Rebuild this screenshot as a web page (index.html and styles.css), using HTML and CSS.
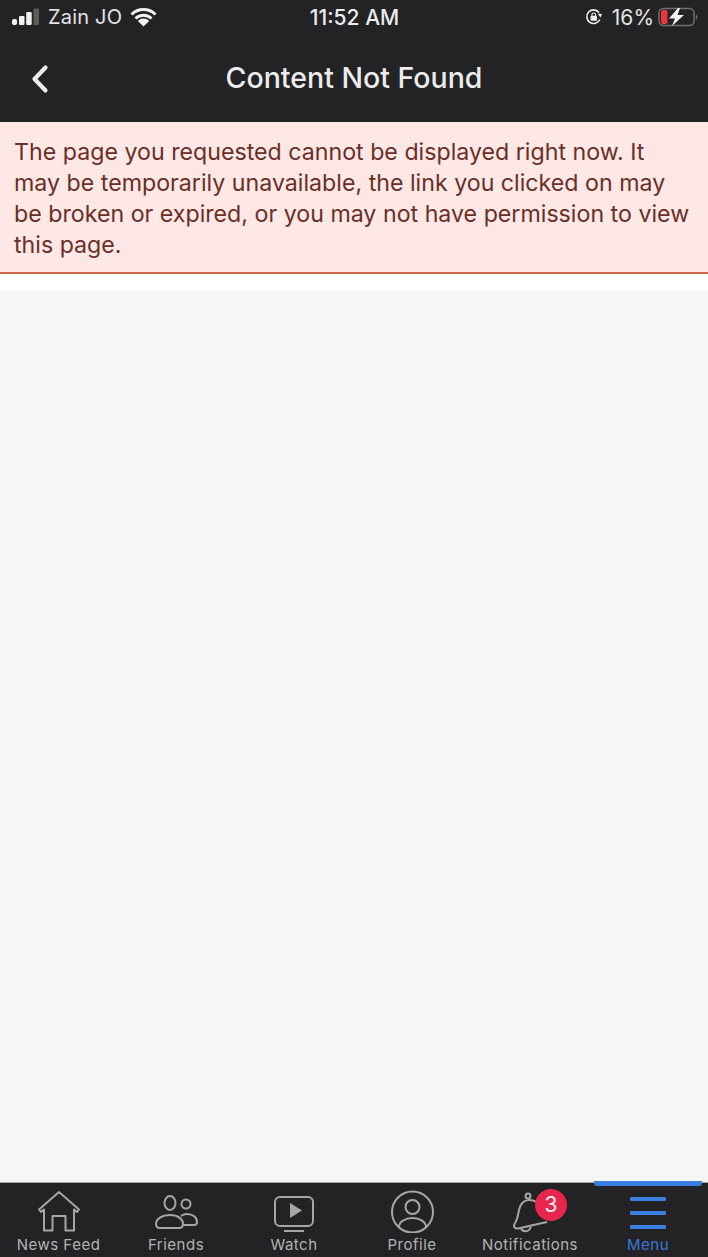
FILE: index.html
```html
<!DOCTYPE html>
<html lang="en">
<head>
<meta charset="utf-8">
<title>Content Not Found</title>
<link rel="stylesheet" href="styles.css">
</head>
<body>
<div class="app">
  <header class="top">
    <div class="status">
      <div class="status-left">
        <svg class="signal" width="31" height="18" viewBox="0 0 31 18"><rect x="2" y="11" width="5" height="6" rx="1.800" fill="#f2f2f2"/><rect x="9" y="8" width="5.500" height="9" rx="1.200" fill="#f2f2f2"/><rect x="16.200" y="4" width="5.500" height="13" rx="1.200" fill="#f2f2f2"/><rect x="23.500" y="0.500" width="5.500" height="16.500" rx="1.200" fill="#5c5c5c"/></svg>
        <span class="carrier">Zain JO</span>
        <svg class="wifi" width="27" height="19" viewBox="0 0 27 19"><path d="M1.500 6.500a17 17 0 0 1 24 0M5.500 10.500a11.500 11.500 0 0 1 16 0" fill="none" stroke="#f2f2f2" stroke-width="3"/><path d="M13.500 18.500L7.800 13a8 8 0 0 1 11.400 0z" fill="#f2f2f2"/></svg>
      </div>
      <span class="clock">11:52 AM</span>
      <div class="status-right">
        <svg class="lock" width="18" height="18" viewBox="0 0 18 18"><path d="M14.800 11.500A6.800 6.800 0 1 1 14 4.500" fill="none" stroke="#f0f0f0" stroke-width="1.600"/><path d="M12.500 5.500l4.500 .5-1.500 3.500z" fill="#f0f0f0"/><rect x="5.500" y="7.800" width="6.500" height="5" rx="1" fill="#f0f0f0"/><path d="M6.900 8V6.800a1.850 1.850 0 0 1 3.700 0V8" fill="none" stroke="#f0f0f0" stroke-width="1.100"/></svg>
        <span class="percent">16%</span>
        <svg class="battery" width="41" height="20" viewBox="0 0 41 20"><rect x="1" y="1.500" width="35" height="17" rx="4.500" fill="none" stroke="#6f6f6f" stroke-width="1.500"/><rect x="3" y="3" width="6.500" height="14" rx="2.200" fill="#e8383d"/><path d="M37.800 7.500c2 .6 2 4.400 0 5z" fill="#6f6f6f"/><path d="M20 1L11 11.500H17L14 19L26 8H19.500L22 1z" fill="#f4f4f4"/></svg>
      </div>
    </div>
    <div class="nav">
      <svg class="back" width="20" height="30" viewBox="0 0 20 30"><path d="M15.500 3.500L4.500 15l11 11.500" fill="none" stroke="#ececec" stroke-width="4.200" stroke-linecap="round" stroke-linejoin="round"/></svg>
      <h1 class="title">Content Not Found</h1>
    </div>
  </header>
  <div class="alert">The page you requested cannot be displayed right now. It may be temporarily unavailable, the link you clicked on may be broken or expired, or you may not have permission to view this page.</div>
  <div class="gap"></div>
  <main class="content"></main>
  <nav class="tabs">
    <div class="tab">
      <svg width="44" height="44" viewBox="0 0 44 44"><path d="M22 3L2 20.500l2 2.500 3-2.500V41.500h8.500V27h13V41.500H37V20.500l3 2.500 2-2.500z" fill="none" stroke="#a6a6a6" stroke-width="2" stroke-linejoin="round"/></svg>
      <span>News Feed</span>
    </div>
    <div class="tab">
      <svg width="44" height="44" viewBox="0 0 44 44"><ellipse cx="16" cy="14" rx="5.500" ry="7" fill="none" stroke="#a6a6a6" stroke-width="2"/><circle cx="32" cy="15" r="4.500" fill="none" stroke="#a6a6a6" stroke-width="2"/><path d="M7 39H25c3 0 4-1.500 4-4 0-5-5-9-13-9S2 30 2 35c0 2.500 1 4 4 4z" fill="none" stroke="#a6a6a6" stroke-width="2"/><path d="M27 27c2-1.500 3.500-2 6-2 6 0 10 3.500 10 8 0 2-1 3-3 3H29" fill="none" stroke="#a6a6a6" stroke-width="2"/></svg>
      <span>Friends</span>
    </div>
    <div class="tab">
      <svg width="44" height="44" viewBox="0 0 44 44"><rect x="3" y="8" width="38" height="29" rx="5" fill="none" stroke="#a6a6a6" stroke-width="2"/><path d="M18 14l12 7.500-12 7.500z" fill="#a6a6a6"/><rect x="12" y="41" width="20" height="2" fill="#a6a6a6"/></svg>
      <span>Watch</span>
    </div>
    <div class="tab">
      <svg width="44" height="44" viewBox="0 0 44 44"><circle cx="22.500" cy="23" r="20.500" fill="none" stroke="#a6a6a6" stroke-width="2"/><circle cx="22.500" cy="18" r="7" fill="none" stroke="#a6a6a6" stroke-width="2"/><path d="M9 38c0-5 6-9 13.500-9S36 33 36 38" fill="none" stroke="#a6a6a6" stroke-width="2"/></svg>
      <span>Profile</span>
    </div>
    <div class="tab">
      <svg width="44" height="44" viewBox="0 0 44 44"><circle cx="20" cy="7" r="2.500" fill="none" stroke="#a6a6a6" stroke-width="2"/><path d="M39 33L10 39.500c-3 .5-5-2-3.500-4.500 3-4 3.500-9 4.500-14 1-6 5-10 10-10 6 0 10 3 12 8" fill="none" stroke="#a6a6a6" stroke-width="2"/><path d="M13 39c1 4 8 5 10-1.500" fill="none" stroke="#a6a6a6" stroke-width="2"/></svg>
      <span>Notifications</span>
      <b class="badge">3</b>
    </div>
    <div class="tab active">
      <i class="indicator"></i>
      <div class="burger"><i></i><i></i><i></i></div>
      <span>Menu</span>
    </div>
  </nav>
</div>
</body>
</html>
```

FILE: styles.css
```css
* { box-sizing: border-box; }
html, body { margin: 0; padding: 0; }
body { font-family: Inter, "Liberation Sans", sans-serif; background: #f5f6f6; }
.app { width: 708px; height: 1257px; display: flex; flex-direction: column; overflow: hidden; }
.top { height: 122px; background: #232325; color: #ececec; flex: none; }
.status { height: 35px; display: grid; grid-template-columns: 1fr auto 1fr; align-items: center; padding: 0 9px 1px 10px; }
.status-left { display: flex; align-items: center; }
.signal { margin-right: 7px; }
.carrier { font-size: 20px; letter-spacing: .2px; color: #e4e4e4; margin-right: 8px; }
.clock { font-size: 21px; font-weight: 500; color: #ececec; }
.status-right { display: flex; align-items: center; justify-content: flex-end; }
.percent { font-size: 21px; margin: 0 4px 0 9px; color: #e4e4e4; }
.nav { height: 87px; display: grid; grid-template-columns: 1fr auto 1fr; align-items: center; padding: 0 30px; }
.back { justify-self: start; }
.title { margin: 0 0 3px; font-size: 28.500px; font-weight: 500; color: #ececec; }
.alert { flex: none; height: 152px; background: #fde8e5; border-bottom: 2px solid #cf6a4c; color: #6b2e26; font-size: 23.200px; line-height: 31px; padding: 15px 14px 0; }
.gap { flex: none; height: 17px; background: #fff; }
.content { flex: 1; background: #f5f6f6; }
.tabs { flex: none; height: 75px; background: #232325; border-top: 1px solid #a9a9a9; display: grid; grid-template-columns: 117px repeat(5, 118px); }
.tab { position: relative; display: flex; flex-direction: column; align-items: center; padding-top: 6px; height: 74px; color: #a6a6a6; }
.tab svg { flex: none; }
.tab span { margin-top: 2px; font-size: 15px; line-height: 20px; letter-spacing: .5px; color: #b4b4b4; white-space: nowrap; }
.badge { position: absolute; left: 64px; top: 6px; width: 32px; height: 32px; border-radius: 50%; background: #e8264c; color: #f4f4f4; font-size: 21px; font-weight: 400; line-height: 32px; text-align: center; }
.indicator { position: absolute; left: 5px; right: 5px; top: -2px; height: 5px; border-radius: 0 0 3px 3px; background: #3b7fe0; }
.burger { display: flex; flex-direction: column; gap: 10px; width: 36px; height: 44px; padding-top: 8px; }
.burger i { display: block; height: 4px; background: #3b7fe0; border-radius: 1px; }
.tab.active span { color: #3d78d8; }
```
